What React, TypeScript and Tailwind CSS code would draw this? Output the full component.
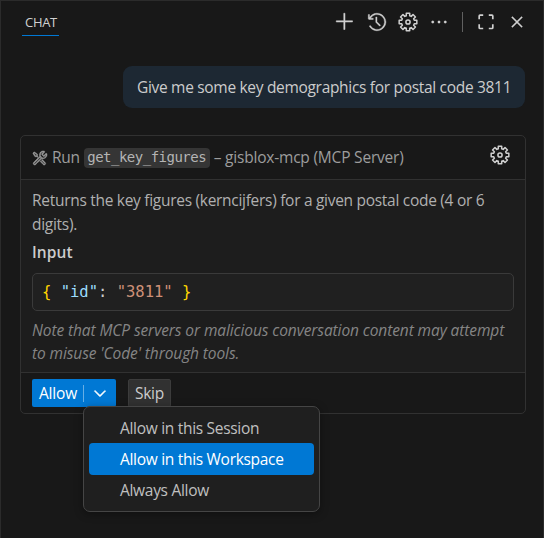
import {
  VscAdd,
  VscChevronDown,
  VscClose,
  VscEllipsis,
  VscHistory,
  VscTools,
} from "react-icons/vsc";

function FullscreenIcon() {
  return (
    <svg width="20" height="20" viewBox="0 0 20 20" fill="none" stroke="currentColor" strokeWidth="1.7" className="ml-[13px]">
      <path d="M3.2 7.2V4q0-.8.8-.8H7.2M12.8 3.2H16q.8 0 .8.8V7.2M16.8 12.3v3.4q0 .8-.8.8h-3.2M7.2 16.5H4q-.8 0-.8-.8v-3.4" />
    </svg>
  );
}

const TEETH = 8;

function gearOutline() {
  const points: string[] = [];
  for (let i = 0; i < TEETH; i++) {
    const center = (i * 360) / TEETH - 90;
    const corners = [
      [-15, 6.5],
      [-11, 9],
      [11, 9],
      [15, 6.5],
    ];
    for (const [offset, radius] of corners) {
      const angle = ((center + offset) * Math.PI) / 180;
      points.push(`${(10 + radius * Math.cos(angle)).toFixed(2)},${(10 + radius * Math.sin(angle)).toFixed(2)}`);
    }
  }
  return points.join(" ");
}

function GearIcon({ className }: { className: string }) {
  return (
    <svg width="20" height="20" viewBox="0 0 20 20" fill="none" stroke="currentColor" strokeWidth="1.5" strokeLinejoin="round" className={className}>
      <polygon points={gearOutline()} />
      <circle cx="10" cy="10" r="2.1" />
    </svg>
  );
}

function PanelHeader() {
  return (
    <header className="flex h-[42px] shrink-0 items-center justify-between pl-[21px] pr-4 text-[#d0d0d0]">
      <div className="mt-px flex h-[26px] w-[37px] items-center border-b border-[#0078d4] pl-[3px] pt-[2px] text-[13px] tracking-[-0.3px]">
        CHAT
      </div>
      <div className="flex items-center">
        <VscAdd size={20} className="stroke-[0.4]" />
        <VscHistory size={20} className="ml-[12px] stroke-[0.3]" />
        <GearIcon className="ml-[11px]" />
        <VscEllipsis size={20} className="ml-[11px] stroke-[0.2]" />
        <div className="ml-[13px] h-5 w-px bg-[#606060]" />
        <FullscreenIcon />
        <VscClose size={20} className="ml-[11px] stroke-[0.3]" />
      </div>
    </header>
  );
}

function ToolCard() {
  return (
    <section className="ml-[19px] mt-[27px] h-[279px] w-[506px] rounded-[5px] border border-[#313131] text-[15.5px]">
      <div className="flex h-[44px] items-center border-b border-[#313131] pl-[11px] pr-[15px] text-[#9d9d9d]">
        <VscTools size={16} className="stroke-[0.5]" />
        <span className="ml-1 tracking-[-0.3px]">Run</span>
        <code className="ml-1 flex h-5 w-[126px] items-center justify-center rounded-[4px] bg-[#353535] font-['DejaVu_Sans_Mono','Liberation_Mono',monospace] text-[14px] tracking-[-0.5px] text-[#b4b4b4]">
          get_key_figures
        </code>
        <span className="ml-1 tracking-[-0.2px]">– gisblox-mcp (MCP Server)</span>
        <GearIcon className="mb-[5px] ml-auto text-[#d0d0d0]" />
      </div>
      <div className="h-[193px] border-b border-[#313131] bg-[#1d1d1d] px-[11px] pt-[8px]">
        <p className="h-[48px] whitespace-nowrap leading-6 tracking-[-0.29px] text-[#b0b0b0]">
          Returns the key figures (kerncijfers) for a given postal code (4 or 6<br />digits).
        </p>
        <h2 className="mt-[4px] font-semibold leading-6 tracking-[0.1px] text-[#cccccc]">Input</h2>
        <pre className="mt-[9px] flex h-[38px] w-[482px] items-center rounded-[5px] border border-[#3a3a3a] bg-[#202020] pl-[9px] pt-px font-['DejaVu_Sans_Mono','Liberation_Mono',monospace] text-[15.5px] text-[#cccccc]">
          <span className="text-[#ffd700]">{"{"}</span>
          <span className="text-[#9cdcfe]">{' "id"'}</span>
          <span>{": "}</span>
          <span className="text-[#ce9178]">{'"3811"'}</span>
          <span className="text-[#ffd700]">{" }"}</span>
        </pre>
        <p className="mt-[8px] whitespace-nowrap italic leading-[23px] tracking-[-0.1px] text-[#858585]">
          Note that MCP servers or malicious conversation content may attempt<br />to misuse 'Code' through tools.
        </p>
      </div>
      <div className="relative flex pl-[11px] pt-[6px]">
        <button className="flex h-7 w-[84px] items-center rounded-[2px] bg-[#0078d4] pl-[7px] text-white">
          <span className="w-[38px] whitespace-nowrap pt-[2px] tracking-[-0.2px]">Allow</span>
          <span className="ml-[6px] h-[17px] w-px bg-[#66aee5]" />
          <VscChevronDown size={18} className="ml-[7px] stroke-[0.6]" />
        </button>
        <button className="ml-3 flex h-7 w-[43px] items-center justify-center rounded-[2px] border border-[#3c3c3c] bg-[#313131] pt-[2px] tracking-[-0.2px] text-[#cccccc]">
          Skip
        </button>
        <Menu />
      </div>
    </section>
  );
}

function Menu() {
  return (
    <div className="absolute left-[62px] top-[33px] flex h-[106px] w-[237px] flex-col rounded-[7px] border border-[#454545] bg-[#1f1f1f] px-[5px] pt-[5px] tracking-[-0.3px] text-[#c0c0c0] shadow-[0_2px_8px_rgba(0,0,0,0.36)]">
      <div className="flex h-[31px] items-center pl-[31px] pt-[2px]">Allow in this Session</div>
      <div className="flex h-8 items-center rounded-[4px] bg-[#0078d4] pl-[31px] pt-[2px] text-white">
        Allow in this Workspace
      </div>
      <div className="flex h-[31px] items-center pl-[31px] pt-px">Always Allow</div>
    </div>
  );
}

export default function App() {
  return (
    <main className="flex h-[538px] w-[544px] flex-col overflow-hidden border-x border-t border-[#2b2b2b] bg-[#181818] font-['Open_Sans','Noto_Sans',sans-serif]">
      <PanelHeader />
      <div className="mr-[18px] mt-[23px] flex h-[42px] w-[402px] shrink-0 items-center self-end rounded-[9px] bg-[#1d2833] pl-[14px] pt-[2px] text-[15.5px] tracking-[-0.31px] text-[#cccccc]">
        Give me some key demographics for postal code 3811
      </div>
      <ToolCard />
    </main>
  );
}
